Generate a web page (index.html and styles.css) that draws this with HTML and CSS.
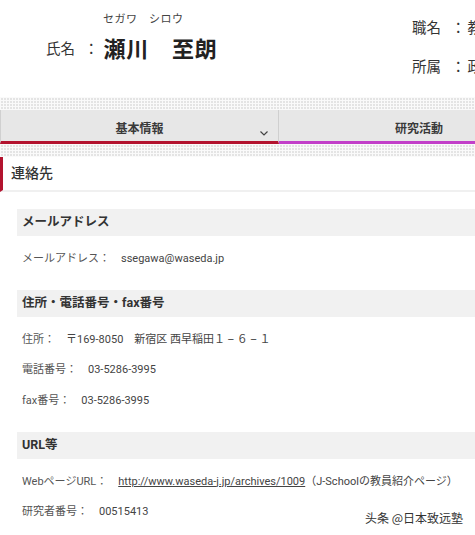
FILE: index.html
```html
<!DOCTYPE html>
<html lang="ja">
<head>
<meta charset="utf-8">
<title>瀬川 至朗</title>
<link rel="stylesheet" href="styles.css">
</head>
<body>
<div class="page">
  <header class="profile">
    <div class="name-block">
      <div class="kana">セガワ　シロウ</div>
      <div class="name-row">
        <span class="label">氏名</span><span class="colon">：</span><span class="kanji">瀬川　至朗</span>
      </div>
    </div>
    <div class="meta">
      <div class="meta-row"><span class="meta-label">職名</span><span class="colon">：</span><span>教授</span></div>
      <div class="meta-row"><span class="meta-label">所属</span><span class="colon">：</span><span>政治経済学術院</span></div>
    </div>
  </header>
  <div class="pattern"></div>
  <nav class="tabs">
    <div class="tab tab-basic">基本情報
      <svg class="chevron" viewBox="0 0 8 5" width="8" height="5"><path d="M0.5 0.5 L4 4 L7.5 0.5" fill="none" stroke="#444" stroke-width="1.2"/></svg>
    </div>
    <div class="tab tab-research">研究活動</div>
  </nav>
  <div class="pattern pattern-low"></div>
  <section class="contact">
    <h2 class="section-title">連絡先</h2>
    <div class="group">
      <h3 class="group-title">メールアドレス</h3>
      <ul class="rows">
        <li><span class="k">メールアドレス：</span><span class="v">ssegawa@waseda.jp</span></li>
      </ul>
    </div>
    <div class="group">
      <h3 class="group-title">住所・電話番号・fax番号</h3>
      <ul class="rows">
        <li><span class="k">住所：</span><span class="v">〒169-8050　新宿区 西早稲田１&thinsp;–&thinsp;６&thinsp;–&thinsp;１</span></li>
        <li><span class="k">電話番号：</span><span class="v">03-5286-3995</span></li>
        <li><span class="k">fax番号：</span><span class="v">03-5286-3995</span></li>
      </ul>
    </div>
    <div class="group">
      <h3 class="group-title">URL等</h3>
      <ul class="rows">
        <li><span class="k">WebページURL：</span><span class="v"><a class="link" href="#">http://www.waseda-j.jp/archives/1009</a>（J-Schoolの教員紹介ページ）</span></li>
        <li><span class="k">研究者番号：</span><span class="v">00515413</span></li>
      </ul>
    </div>
  </section>
  <div class="watermark">头条 @日本致远塾</div>
</div>
</body>
</html>
```

FILE: styles.css
```css
html, body {
  margin: 0;
  padding: 0;
  background: #fff;
}
body {
  font-family: Roboto, "Noto Sans CJK JP", sans-serif;
  color: #333;
}
.page {
  position: relative;
  width: 475px;
  height: 535px;
  overflow: hidden;
}
.profile {
  display: flex;
  height: 97px;
  padding-left: 46px;
  box-sizing: border-box;
  white-space: nowrap;
}
.name-block {
  width: 366px;
  flex-shrink: 0;
  padding-top: 12px;
}
.kana {
  margin-left: 57px;
  font-size: 11px;
  line-height: 16px;
  color: #444;
  letter-spacing: 0.5px;
}
.name-row {
  display: flex;
  align-items: center;
  height: 26px;
  margin-top: 6px;
}
.label {
  font-size: 14.5px;
  color: #333;
}
.colon {
  font-size: 14.5px;
  margin-left: 9px;
  margin-right: 5px;
  color: #333;
}
.kanji {
  font-size: 22px;
  font-weight: 700;
  letter-spacing: 0.8px;
  color: #222;
}
.meta {
  flex-shrink: 0;
  padding-top: 9px;
  font-size: 14.5px;
}
.meta-row {
  line-height: 39px;
  display: flex;
}
.meta .colon {
  margin-left: 10px;
  margin-right: 2px;
}
.pattern {
  height: 13px;
  background-color: #e4e4e4;
  background-image:
    linear-gradient(to right, #fafafa 1px, transparent 1px),
    linear-gradient(to bottom, #fafafa 1px, transparent 1px);
  background-size: 3px 3px;
}
.pattern-low {
  height: 13px;
}
.tabs {
  display: flex;
  height: 34px;
  white-space: nowrap;
}
.tab {
  position: relative;
  flex-shrink: 0;
  width: 279px;
  box-sizing: border-box;
  background: #e7e7e7;
  font-size: 12px;
  font-weight: 700;
  color: #3a3a3a;
  text-align: center;
  height: 34px;
  line-height: 32px;
  padding-top: 3px;
  border-bottom: 3px solid #b3132f;
}
.tab-basic {
  border-left: 1px solid #d0d0d0;
  border-right: 1px solid #cfcfcf;
}
.tab-research {
  width: 280px;
  border-bottom-color: #c23fc9;
}
.chevron {
  position: absolute;
  left: 259px;
  top: 21px;
}
.contact {
  margin: 0;
}
.section-title {
  margin: 0;
  height: 33px;
  line-height: 33px;
  padding-left: 8px;
  border-left: 3px solid #b3132f;
  border-bottom: 2px solid #f0f0f0;
  font-size: 14px;
  font-weight: 500;
  color: #333;
}
.group {
  margin-left: 17px;
}
.section-title + .group {
  margin-top: 17px;
}
.group-title {
  margin: 0;
  height: 26.5px;
  line-height: 26.5px;
  background: #f1f1f1;
  padding-left: 5px;
  font-size: 12.5px;
  font-weight: 700;
  color: #333;
}
.rows {
  list-style: none;
  margin: 0;
  padding: 8px 0 16px 5px;
}
.rows li {
  height: 30.5px;
  line-height: 30.5px;
  font-size: 11px;
  color: #555;
  white-space: nowrap;
}
.k {
  color: #555;
}
.v {
  margin-left: 11px;
  color: #444;
}
.link {
  color: #444;
  text-decoration: underline;
}
.watermark {
  position: absolute;
  left: 365px;
  top: 509px;
  font-family: "Noto Sans CJK SC", sans-serif;
  font-size: 12px;
  color: #333;
}
```
